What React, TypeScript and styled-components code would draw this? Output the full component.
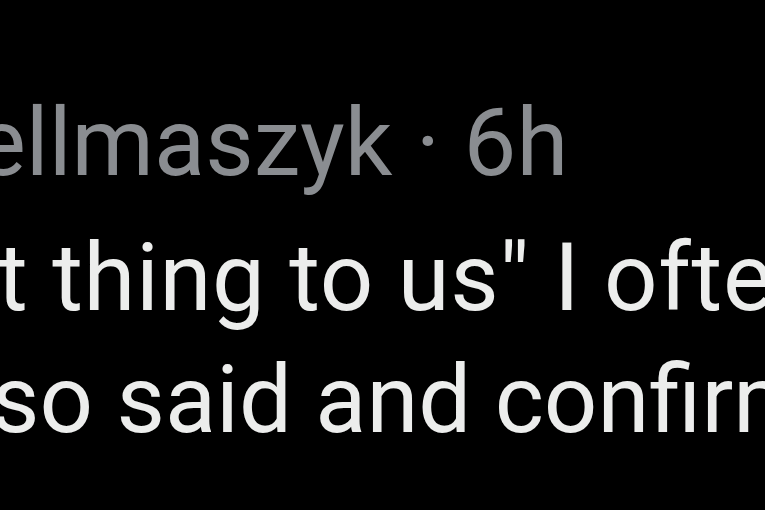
import React from "react";
import styled, { createGlobalStyle } from "styled-components";

const Global = createGlobalStyle`
  html, body { margin: 0; padding: 0; background: #000; }
  body { width: 765px; height: 510px; overflow: hidden; }
`;

const Frame = styled.div`
  width: 765px;
  height: 510px;
  background: #000;
  overflow: hidden;
  display: flex;
  flex-direction: column;
  font-family: Roboto, "Liberation Sans", sans-serif;
`;

const Line = styled.div<{ $top: number; $indent: number; $spacing?: number; $muted?: boolean }>`
  margin-top: ${(p) => p.$top}px;
  margin-left: ${(p) => p.$indent}px;
  font-size: 94px;
  line-height: 1;
  letter-spacing: ${(p) => p.$spacing ?? 0}px;
  white-space: nowrap;
  color: ${(p) => (p.$muted ? "#8a8d91" : "#ecedec")};
`;

export default function App() {
  return (
    <>
      <Global />
      <Frame>
        <Line $muted $top={96} $indent={-24}>
          ellmaszyk · 6h
        </Line>
        <Line $top={41} $indent={-3} $spacing={0.6}>
          t thing to us" I often
        </Line>
        <Line $top={28} $indent={-9}>
          so said and confirmed
        </Line>
      </Frame>
    </>
  );
}
